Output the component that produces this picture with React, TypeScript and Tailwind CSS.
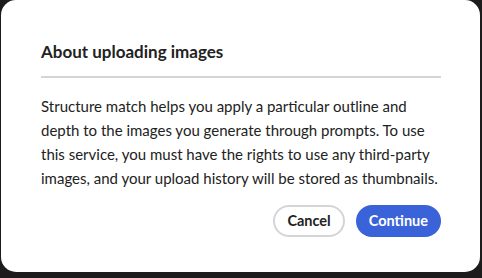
export default function App() {
  return (
    <div className="w-[482px] h-[278px] bg-[#1d1b1c] overflow-hidden" style={{ fontFamily: "Lato, 'Noto Sans', sans-serif" }}>
      <div className="ml-[1px] w-[479px] h-[272px] bg-white rounded-[15px] pl-[40px] pr-[39px] pt-[40px]">
        <h2 className="text-[17px] leading-[24px] font-bold text-[#222222]">About uploading images</h2>
        <div className="mt-[12px] h-[2px] bg-[#d5d5d5]" />
        <p className="mt-[16px] text-[15px] leading-[24px] text-[#222222]">
          Structure match helps you apply a particular outline and depth to the images you generate through prompts. To use this service, you must have the rights to use any third&#8209;party images, and your upload history will be stored as thumbnails.
        </p>
        <div className="mt-[15px] flex justify-end gap-[11px]">
          <button className="h-[32px] px-[12px] rounded-full border-2 border-[#d5d5d5] text-[14.5px] font-bold text-[#222222]">Cancel</button>
          <button className="h-[32px] px-[13px] rounded-full bg-[#3b63d9] text-[14.5px] font-bold text-white">Continue</button>
        </div>
      </div>
    </div>
  );
}
